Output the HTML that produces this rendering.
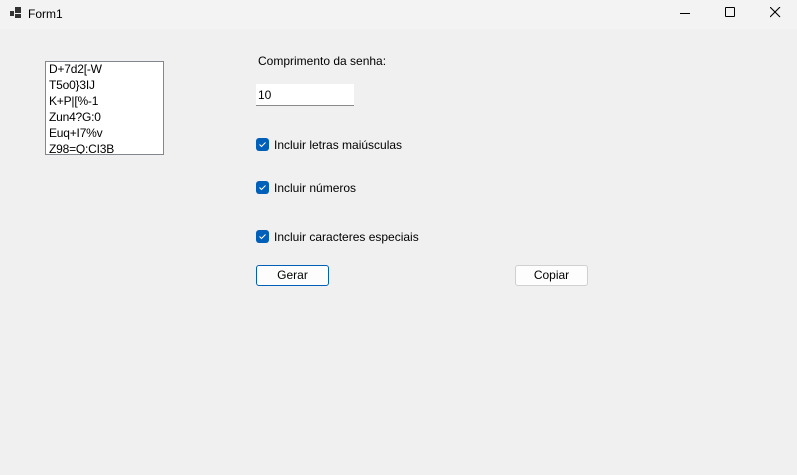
<!DOCTYPE html><html><head><style>
body{margin:0;width:797px;height:475px;background:#f0f0f0;font-family:"Liberation Sans",sans-serif;font-size:12px;color:#000;position:relative;overflow:hidden}
.a{position:absolute}
.cb{position:absolute;width:13px;height:13px;background:#005fb8;border-radius:3px}
.lbl{position:absolute;left:274px}
.btn{position:absolute;height:19px;background:#fdfdfd;border:1px solid #d0d0d0;border-radius:3px;text-align:center;line-height:19px}
</style></head><body>
<div class="a" style="left:0;top:0;width:797px;height:29px;background:#f3f3f3"></div>
<div class="a" style="left:10px;top:11px;width:4px;height:5px;background:#333"></div>
<div class="a" style="left:15px;top:7px;width:6px;height:6px;background:#333"></div>
<div class="a" style="left:15px;top:14px;width:6px;height:4px;background:#333"></div>
<div class="a" style="left:28px;top:7px;font-size:12px">Form1</div>
<div class="a" style="left:680px;top:13px;width:10px;height:1px;background:#000"></div>
<div class="a" style="left:725px;top:7px;width:8px;height:8px;border:1px solid #000;border-radius:1px"></div>
<svg class="a" style="left:770px;top:7px" width="11" height="11"><path d="M0 0L10 10M10 0L0 10" stroke="#000" stroke-width="1.1"/></svg>
<div class="a" style="left:45px;top:61px;width:117px;height:92px;background:#fff;border:1px solid #828790;line-height:16px;overflow:hidden">
<div style="padding-left:3px;margin-top:-1px;letter-spacing:-0.2px">D+7d2[-W<br>T5o0}3IJ<br>K+P|[%-1<br>Zun4?G:0<br>Euq+I7%v<br>Z98=Q:CI3B</div></div>
<div class="a" style="left:258px;top:54px">Comprimento da senha:</div>
<div class="a" style="left:256px;top:84px;width:98px;height:21px;background:#fff;border-bottom:1px solid #8a8a8a"><span style="position:absolute;left:2px;top:4px">10</span></div>
<div class="cb" style="left:256px;top:138px"></div><div class="lbl" style="top:138px">Incluir letras maiúsculas</div>
<div class="cb" style="left:256px;top:181px"></div><div class="lbl" style="top:181px">Incluir números</div>
<div class="cb" style="left:256px;top:230px"></div><div class="lbl" style="top:230px">Incluir caracteres especiais</div>
<svg class="a" style="left:256px;top:138px" width="13" height="110"><g fill="none" stroke="#fff" stroke-width="1"><path d="M3.5 6.5l2 2 4-4"/><path d="M3.5 49.5l2 2 4-4"/><path d="M3.5 98.5l2 2 4-4"/></g></svg>
<div class="btn" style="left:256px;top:265px;width:71px;border-color:#005fb8">Gerar</div>
<div class="btn" style="left:515px;top:265px;width:71px">Copiar</div>
</body></html>
